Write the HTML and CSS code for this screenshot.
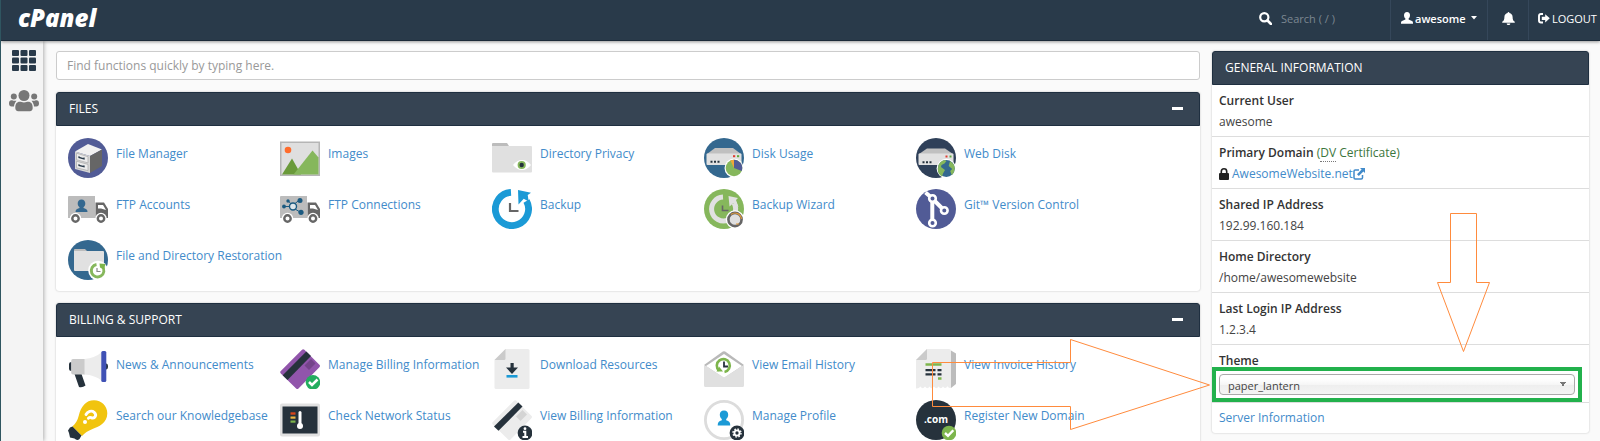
FILE: index.html
```html
<!DOCTYPE html>
<html lang="en">
<head>
<meta charset="utf-8">
<title>cPanel</title>
<link rel="stylesheet" href="styles.css">
</head>
<body>
<header class="topbar">
  <a class="logo" href="#">cPanel</a>
  <label class="top-search">
    <svg width="13" height="13" viewBox="0 0 13 13"><circle cx="5.3" cy="5.3" r="4.1" fill="none" stroke="#fff" stroke-width="2.2"/><path d="M8.5 8.5L12 12" stroke="#fff" stroke-width="2.6" stroke-linecap="round"/></svg>
    <input type="text" placeholder="Search ( / )" aria-label="Search">
  </label>
  <button class="top-cell user" type="button">
    <svg width="12" height="12" viewBox="0 0 12 12"><path d="M6 0c2 0 3 1.400 3 3.200 0 1.500-.6 2.600-1.400 3.300v1l3.400 1.400c.6.300 1 .900 1 2.100v.700H0V11c0-1.200.4-1.800 1-2.100l3.400-1.400v-1C3.600 5.800 3 4.700 3 3.200 3 1.400 4 0 6 0z" fill="#fff"/></svg>
    <span class="user-name">awesome</span>
    <svg class="caret" width="6" height="4" viewBox="0 0 6 4"><path d="M0 0h6L3 3.500z" fill="#fff"/></svg>
  </button>
  <button class="top-cell bell" type="button" aria-label="Notifications">
    <svg width="13" height="13" viewBox="0 0 13 13"><path d="M6.500 0c.6 0 .9.400.9.900 2 .400 3.200 2 3.200 4 0 2.800.7 3.700 1.900 4.700.6.500.4 1.200-.4 1.200H.9c-.8 0-1-.7-.4-1.200 1.200-1 1.900-1.900 1.900-4.700 0-2 1.200-3.600 3.200-4 0-.5.300-.9.900-.9zM4.700 11.400h3.600c0 1-.8 1.600-1.800 1.600s-1.800-.6-1.800-1.600z" fill="#fff"/></svg>
  </button>
  <a class="top-cell logout" href="#">
    <svg width="12" height="11" viewBox="0 0 12 11"><path d="M5 1H3Q1 1 1 3v4.500q0 2 2 2h2" fill="none" stroke="#fff" stroke-width="1.900"/><path d="M3.800 3.700h3.400V1.200L11.800 5.300 7.200 9.400V6.900H3.800z" fill="#fff"/></svg>
    <span>LOGOUT</span>
  </a>
</header>
<div class="shell">
  <nav class="side">
    <a href="#" aria-label="Home">
      <svg width="24" height="22" viewBox="0 0 24 22" fill="#293a4a"><rect width="7" height="6" rx="1"/><rect x="8.500" width="7" height="6" rx="1"/><rect x="17" width="7" height="6" rx="1"/><rect y="7.500" width="7" height="6" rx="1"/><rect x="8.500" y="7.500" width="7" height="6" rx="1"/><rect x="17" y="7.500" width="7" height="6" rx="1"/><rect y="15" width="7" height="6" rx="1"/><rect x="8.500" y="15" width="7" height="6" rx="1"/><rect x="17" y="15" width="7" height="6" rx="1"/></svg>
    </a>
    <a href="#" aria-label="User Manager">
      <svg width="30" height="22" viewBox="0 0 30 22" fill="#777"><circle cx="15" cy="5.500" r="5.500"/><path d="M6.300 18c0-4 1.500-6.200 4.500-6.200 1.200 0 2.200.7 4.200.7s3-.7 4.200-.7c3 0 4.500 2.200 4.500 6.200 0 2-1 3.200-3 3.200H9.300c-2 0-3-1.200-3-3.200z"/><circle cx="4.800" cy="6.500" r="3"/><circle cx="25.200" cy="6.500" r="3"/><path d="M0 13.500C0 11.500 1 10.300 2.500 10.300c1 0 1.500.5 2.800.5s1.700-.2 2.200-.1C6 12.500 5.200 14 5 16.500H2.500C1 16.500 0 15.500 0 13.500zM30 13.500c0-2-1-3.200-2.500-3.200-1 0-1.500.5-2.800.5s-1.700-.2-2.200-.1c1.500 1.800 2.300 3.300 2.500 5.800h2.500c1.500 0 2.500-1 2.500-3z"/></svg>
    </a>
  </nav>
  <main class="content">
    <input class="quick-find" type="text" placeholder="Find functions quickly by typing here." aria-label="Find functions">

    <section class="panel">
      <h2 class="panel-head">FILES<button type="button" class="collapse" aria-label="Collapse Files"></button></h2>
      <div class="items">
        <a class="item" href="#">
          <svg viewBox="0 0 40 40"><circle cx="20" cy="20" r="20" fill="#515b96"/><path d="M7 13.500L20 6l14 5.500-12 6.500z" fill="#f1f1f1"/><path d="M7 13.500L22 18v17L7 31z" fill="#d6d6d6"/><path d="M22 18l12-6.500V28L22 35z" fill="#666"/><path d="M8.500 15.200l11.500 3.500v6.200l-11.500-3.200zM8.500 23.200L20 26.400v6.200L8.500 29.800z" fill="#ececec" stroke="#aaa" stroke-width=".7"/><path d="M11 18.300v1.200l5 1.400v-1.300M11 26.200v1.200l5 1.300v-1.300" fill="none" stroke="#293a4a" stroke-width="1.300"/></svg>
          <span>File Manager</span></a>
        <a class="item" href="#">
          <svg viewBox="0 0 40 40"><path d="M.7 4.200h38.600v33H.7z" fill="#dfdfdf" stroke="#b5b5b5" stroke-width="1.600"/><circle cx="8" cy="12" r="3.300" fill="#ff6c2c"/><path d="M2 36.400L12 20.500l9 15.900z" fill="#6a9a3a"/><path d="M13.500 36.400L32.500 12.500l6 7v16.900z" fill="#86b75c"/></svg>
          <span>Images</span></a>
        <a class="item" href="#">
          <svg viewBox="0 0 40 40"><path d="M0 8V6q0-1 1-1h14l2 3v2H0z" fill="#bcbcbc"/><path d="M0 8h39q1 0 1 1v24.500q0 1-1 1H1q-1 0-1-1z" fill="#e0e0e0"/><path d="M21 27q4-5 9-5t9 5q-4 5-9 5t-9-5z" fill="#fff"/><circle cx="29.700" cy="27" r="4.100" fill="#86b75c"/><circle cx="29.700" cy="27" r="2.200" fill="#24313c"/></svg>
          <span>Directory Privacy</span></a>
        <a class="item" href="#">
          <svg viewBox="0 0 40 40"><circle cx="20" cy="20" r="20" fill="#34688f"/><path d="M11 10h18l8 6H3z" fill="#c0c0c0"/><path d="M3.500 15.500h33q1 0 1 1V26q0 1-1 1h-33q-1 0-1-1v-9.500q0-1 1-1z" fill="#e1e1e1"/><path d="M6.500 22.800h2v2h-2zM10 22.800h2v2h-2zM13.500 22.800h2v2h-2z" fill="#24313c"/><path d="M29 17.200h2.200v2H29z" fill="#e03c31"/><path d="M33 17.200h2.200v2H33z" fill="#5fa83a"/><circle cx="30" cy="30" r="9.500" fill="#fff"/><circle cx="30" cy="30" r="8.300" fill="#86b75c"/><path d="M30 30v-8.300a8.300 8.300 0 0 1 7.700 11.300z" fill="#515b96"/><path d="M30 30v-8.300a8 8 0 0 0-3.600.8z" fill="#f0a63a"/></svg>
          <span>Disk Usage</span></a>
        <a class="item" href="#">
          <svg viewBox="0 0 40 40"><circle cx="20" cy="20" r="20" fill="#2f4059"/><path d="M11 10.500h18l8 5.500H3z" fill="#c0c0c0"/><path d="M3.500 15.500h33q1 0 1 1V26q0 1-1 1h-33q-1 0-1-1v-9.500q0-1 1-1z" fill="#e1e1e1"/><path d="M6.500 23.300h2v2h-2zM10 23.300h2v2h-2zM13.500 23.300h2v2h-2z" fill="#24313c"/><path d="M29.500 17.500h2v2h-2z" fill="#e03c31"/><path d="M33.500 17.500h2v2h-2z" fill="#5fa83a"/><circle cx="30.300" cy="30.500" r="9.700" fill="#fff"/><circle cx="30.300" cy="30.500" r="8.500" fill="#34688f"/><path d="M22.500 27q2-4 6-5l2 1-2 2.500-3 1.500-.5 2 4 3-2 3.500-1 3q-4-2-4.200-7zM34 23q5 3 4.700 8-1 5-3 6l-1.500-4 2-2-3.500-3z" fill="#86b75c"/></svg>
          <span>Web Disk</span></a>
        <a class="item" href="#">
          <svg viewBox="0 0 40 40"><path d="M0 8q0-1 1-1h26v22H0z" fill="#bcbcbc"/><path d="M27.500 13.500H36l4.300 7V29H27.500z" fill="#666"/><path d="M30 16h5l3 5-5-1.500h-3z" fill="#fff"/><circle cx="7.500" cy="29.500" r="5.700" fill="#fff"/><circle cx="7.500" cy="29.500" r="3.200" fill="#fff" stroke="#666" stroke-width="2.400"/><circle cx="33" cy="29.500" r="5.700" fill="#fff"/><circle cx="33" cy="29.500" r="3.200" fill="#fff" stroke="#666" stroke-width="2.400"/><path d="M13.500 10.500c2.600 0 3.800 1.700 3.800 4 0 1.700-.8 3-1.800 3.700v.8c3 .8 4 1.700 4 4h-12c0-2.300 1-3.200 4-4v-.8c-1-.7-1.800-2-1.800-3.700 0-2.300 1.200-4 3.800-4z" fill="#34688f"/></svg>
          <span>FTP Accounts</span></a>
        <a class="item" href="#">
          <svg viewBox="0 0 40 40"><path d="M0 8q0-1 1-1h26v22H0z" fill="#bcbcbc"/><path d="M27.500 13.500H36l4.300 7V29H27.500z" fill="#666"/><path d="M30 16h5l3 5-5-1.500h-3z" fill="#fff"/><circle cx="7.500" cy="29.500" r="5.700" fill="#fff"/><circle cx="7.500" cy="29.500" r="3.200" fill="#fff" stroke="#666" stroke-width="2.400"/><circle cx="33" cy="29.500" r="5.700" fill="#fff"/><circle cx="33" cy="29.500" r="3.200" fill="#fff" stroke="#666" stroke-width="2.400"/><g fill="#1b5a80" stroke="#1b5a80"><path d="M4 17.500h6M8.500 12l2.500 3M15 14.500l4.500-3.500M15 20l5 3"/><circle cx="13" cy="17.500" r="3.500" fill="#dfe6ea" stroke-width="1.400"/><g stroke="none"><circle cx="4" cy="17.500" r="1.900"/><circle cx="8" cy="12" r="1.700"/><circle cx="20" cy="11.500" r="2.500"/><circle cx="21" cy="23.300" r="2.600"/></g></g></svg>
          <span>FTP Connections</span></a>
        <a class="item" href="#">
          <svg viewBox="0 0 40 40"><path d="M19 3.400A16.600 16.600 0 1 0 34.500 12" fill="none" stroke="#1b9ad6" stroke-width="6.800"/><path d="M26 1l13 2.800-3.300 2.200 1 6.500-5-2.800-5.200 5.800z" fill="#1b9ad6"/><path d="M18 14v8h8.500" fill="none" stroke="#666" stroke-width="2.200"/></svg>
          <span>Backup</span></a>
        <a class="item" href="#">
          <svg viewBox="0 0 40 40"><circle cx="20" cy="20" r="20" fill="#86b75c"/><path d="M19 8a12 12 0 1 0 11 6" fill="none" stroke="#e1e1e1" stroke-width="5"/><path d="M24.500 7l9.500 2-2 2 2.500 7-5-4-4 3.500z" fill="#e1e1e1"/><path d="M18.500 16.500v5h6" fill="none" stroke="#666" stroke-width="1.600"/><circle cx="31" cy="30.500" r="9.200" fill="#fff"/><circle cx="31" cy="30.500" r="6.600" fill="#dfdfdf" stroke="#666" stroke-width="2.600"/><path d="M27 25.500a6.400 6.400 0 0 1 10.400 4.500M32 35h3" fill="none" stroke="#e29a3a" stroke-width="1.200"/></svg>
          <span>Backup Wizard</span></a>
        <a class="item" href="#">
          <svg viewBox="0 0 40 40"><circle cx="20" cy="20" r="20" fill="#515b96"/><g fill="#515b96" stroke="#fff" stroke-width="2.600"><path d="M9.500 3.500l7 6M16.300 9.500v24M16.300 9.500l12 12" stroke-width="4"/><circle cx="16.500" cy="9.500" r="3.300"/><circle cx="28.300" cy="21.500" r="3.300"/><circle cx="16.500" cy="34" r="3.300"/></g></svg>
          <span>Git™ Version Control</span></a>
        <a class="item" href="#">
          <svg viewBox="0 0 40 40"><circle cx="20" cy="20" r="20" fill="#34688f"/><path d="M6 10q0-1 1-1h10l2 2v3H6z" fill="#bcbcbc"/><path d="M6 11h29q1 0 1 1v19H7q-1 0-1-1z" fill="#e1e1e1"/><circle cx="30" cy="30.500" r="9.800" fill="#fff"/><path d="M28.500 24.500a6.300 6.300 0 1 0 5.800 2" fill="none" stroke="#86b75c" stroke-width="2.900"/><path d="M31.500 23.500l6 .5-1.500 5.500-4-2z" fill="#7db54c"/><path d="M29 28v3.500h3.500" fill="none" stroke="#888" stroke-width="1.200"/></svg>
          <span>File and Directory Restoration</span></a>
      </div>
    </section>

    <section class="panel">
      <h2 class="panel-head">BILLING &amp; SUPPORT<button type="button" class="collapse" aria-label="Collapse Billing and Support"></button></h2>
      <div class="items">
        <a class="item" href="#">
          <svg viewBox="0 0 40 40"><path d="M3.500 13Q1 13 1 15v5q0 2 2.500 2zM38 14.500q2 0 2 3t-2 3zM6.500 25h7l4 11.500q-3 2.500-6.500 1.500z" fill="#26323c"/><path d="M5 10h12v15.500H5q-1.800 0-1.800-2V12q0-2 1.800-2z" fill="#cbcbcb"/><path d="M16.500 10Q27 9 34 3v29q-7-6-17.500-6.500z" fill="#ececec"/><rect x="33.300" y="2" width="5" height="31" rx="1.500" fill="#3f51b5"/></svg>
          <span>News &amp; Announcements</span></a>
        <a class="item" href="#">
          <svg viewBox="0 0 40 40"><path d="M22 .8q1.200-1.200 2.400 0l15 15q1.200 1.200 0 2.400L18.500 39.500q-1.200 1.200-2.400 0L.8 24.500q-1.200-1.200 0-2.400z" fill="#9155ab"/><path d="M26.300 2.500L31 7 7.500 31 2.700 26.300z" fill="#26323c"/><path d="M31 10l4.500 4.500-6.500 6.500-4.500-4.500z" fill="#74448a"/><circle cx="33" cy="33.300" r="7.300" fill="#24ad5f"/><path d="M29 33l3 3 5.500-5.500" fill="none" stroke="#fff" stroke-width="2.500"/></svg>
          <span>Manage Billing Information</span></a>
        <a class="item" href="#">
          <svg viewBox="0 0 40 40"><path d="M13.500 0H36q1.500 0 1.500 1.500v37Q37.500 40 36 40H4q-1.500 0-1.500-1.500V11z" fill="#ececec"/><path d="M13.500 0v9.500q0 1.500-1.500 1.500H2.500z" fill="#cbcbcb"/><path d="M18.500 14h3.200v4.500H26L20 25l-6-6.500h4.500z" fill="#26323c"/><path d="M14.500 26h11v2.600h-11z" fill="#1b9ad6"/></svg>
          <span>Download Resources</span></a>
        <a class="item" href="#">
          <svg viewBox="0 0 40 40"><path d="M0 16L18.800 2.600q1.200-.9 2.400 0L40 16l-20 14z" fill="#b9b9b9"/><path d="M2 17L20 5l18 12-18 12z" fill="#fff"/><path d="M0 16l20 12.500L40 16v20.500q0 1.500-1.500 1.500h-37Q0 38 0 36.500z" fill="#e0e0e0"/><path d="M15 21.500A6.500 6.500 0 1 1 20.500 23" fill="none" stroke="#7db54c" stroke-width="2.600"/><path d="M12.500 22.500h6.500l-4-5z" fill="#7db54c"/><path d="M20 12.500v5h4" fill="none" stroke="#26323c" stroke-width="1.800"/></svg>
          <span>View Email History</span></a>
        <a class="item" href="#">
          <svg viewBox="0 0 40 40"><path d="M35 1.500l5 3V35l-5 4z" fill="#bcbcbc"/><path d="M11 0h22q2 0 2 2v37q-2 .5-3.500-1.800-2 3.500-4.500.3-2 3.500-4.500 0-2 3.500-4.500 0-2.500 3.500-4.500 0-2 3.500-4.500 0-2.500 3.500-4.500 0Q2.500 40 0 39.500V11z" fill="#ececec"/><path d="M11 0v9.500q0 1.500-1.500 1.500H0z" fill="#cbcbcb"/><path d="M9.500 15.500h16M22 29.500h3.500" stroke="#7db54c" stroke-width="2.400"/><path d="M9.500 21.200h10M21.500 21.200h4M9.500 25.400h10M21.500 25.400h4" stroke="#26323c" stroke-width="2.200"/></svg>
          <span>View Invoice History</span></a>
        <a class="item" href="#">
          <svg viewBox="0 0 40 40"><path d="M26 .3c7.500 0 13.300 5.700 13.300 13 0 10-8.800 13.500-14.800 15.700-4.500 1.700-8 4-10.500 7L4.300 26.500c3.500-3 5.200-6 6.500-11C13 6.500 18 .3 26 .3z" fill="#f1c40f"/><path d="M4.500 26.500L13.500 35.500 11.500 39Q9 41 6.500 38.500L2 37.500 1 33 0 30.500 2 27.500z" fill="#26323c"/><path d="M18 14.500c1.500-3 5.500-4.500 8.200-2.200 3 2.600.8 7-3.200 5.300-1-.4-1.800-.2-2.600.6" fill="none" stroke="#fff" stroke-width="2.900" stroke-linecap="round"/><circle cx="17" cy="22" r="2" fill="#fff"/></svg>
          <span>Search our Knowledgebase</span></a>
        <a class="item" href="#">
          <svg viewBox="0 0 40 40"><rect y="3.500" width="40" height="33" rx="2" fill="#e1e1e1"/><path d="M2.500 6.500h35v27h-35z" fill="#26323c"/><path d="M10.500 13.500h5" stroke="#d8451a" stroke-width="2.400"/><path d="M10.500 17.600h5" stroke="#efb640" stroke-width="2.200"/><path d="M10.500 21.600h5" stroke="#7db54c" stroke-width="2.200"/><path d="M20 12.500v14" stroke="#fff" stroke-width="3" stroke-linecap="round"/><circle cx="20" cy="26" r="3" fill="#fff"/></svg>
          <span>Check Network Status</span></a>
        <a class="item" href="#">
          <svg viewBox="0 0 40 40"><path d="M22 .8q1.200-1.200 2.400 0l15 15q1.200 1.200 0 2.400L18.500 39.500q-1.200 1.200-2.400 0L.8 24.500q-1.200-1.200 0-2.400z" fill="#ececec"/><path d="M26.300 2.500L30.500 6.500 6.500 30.800 2 26.500z" fill="#26323c"/><path d="M30.500 10l4.500 4.500-6.500 6.500-4.500-4.500z" fill="#d4d4d4"/><circle cx="33" cy="33" r="7.400" fill="#26323c"/><path d="M31 31.800h2.300v5M30.500 37h5.500" fill="none" stroke="#fff" stroke-width="2"/><circle cx="33" cy="28.700" r="1.400" fill="#fff"/></svg>
          <span>View Billing Information</span></a>
        <a class="item" href="#">
          <svg viewBox="0 0 40 40"><circle cx="20" cy="20" r="18.600" fill="#fff" stroke="#dcdcdc" stroke-width="2.800"/><path d="M20 10.500c2.900 0 4.200 1.900 4.200 4.300 0 1.900-.8 3.300-2 4.200v1.200c3 .7 4.100 2.200 4.100 5.400H13.700c0-3.200 1.100-4.700 4.100-5.400V19c-1.200-.9-2-2.300-2-4.200 0-2.400 1.300-4.300 4.200-4.300z" fill="#1b9ad6"/><circle cx="33" cy="33" r="7.400" fill="#26323c"/><circle cx="33" cy="33" r="2.600" fill="none" stroke="#fff" stroke-width="1.900"/><circle cx="33" cy="33" r="4" fill="none" stroke="#fff" stroke-width="1.400" stroke-dasharray="1.570 1.570"/></svg>
          <span>Manage Profile</span></a>
        <a class="item" href="#">
          <svg viewBox="0 0 40 40"><circle cx="20" cy="20" r="20" fill="#26323c"/><text x="20" y="23" class="com" text-anchor="middle">.com</text><circle cx="33" cy="33" r="7.300" fill="#7db54c"/><path d="M29 33l3 2.800 5.300-5.600" fill="none" stroke="#fff" stroke-width="2.400"/></svg>
          <span>Register New Domain</span></a>
      </div>
    </section>
  </main>

  <aside class="info">
    <section class="panel">
      <h2 class="panel-head">GENERAL INFORMATION</h2>
      <dl class="facts">
        <div class="fact"><dt>Current User</dt><dd>awesome</dd></div>
        <div class="fact"><dt>Primary Domain <span class="cert">(<abbr title="Domain Validated">DV</abbr> Certificate)</span></dt>
          <dd class="domain"><svg class="lock" width="10" height="12" viewBox="0 0 10 12"><path d="M2.300 6V3.500a2.700 2.700 0 0 1 5.400 0V6" fill="none" stroke="#222" stroke-width="1.600"/><rect y="5" width="10" height="7" rx="1" fill="#222"/></svg><a href="#">AwesomeWebsite.net</a><svg width="12" height="12" viewBox="0 0 12 12"><path d="M6 2H2.200Q1 2 1 3.200v6.600Q1 11 2.200 11h6Q9.500 11 9.500 9.800V7" fill="none" stroke="#428bca" stroke-width="1.500"/><path d="M7 0h5v5l-1.600-1.600-4.600 4.600-1.800-1.800 4.600-4.600z" fill="#428bca"/></svg></dd></div>
        <div class="fact"><dt>Shared IP Address</dt><dd>192.99.160.184</dd></div>
        <div class="fact"><dt>Home Directory</dt><dd>/home/awesomewebsite</dd></div>
        <div class="fact"><dt>Last Login IP Address</dt><dd>1.2.3.4</dd></div>
        <div class="fact theme"><dt><label for="theme">Theme</label></dt>
          <dd class="theme-pick"><select id="theme"><option>paper_lantern</option></select></dd></div>
      </dl>
      <a class="server" href="#">Server Information</a>
    </section>
    <svg class="pointers" width="560" height="382" viewBox="0 0 560 382"><path d="M.5 149.500h138v-23L277.500 172 138.500 216.500v-23H.5zM518.500.5h26v69h13L531.500 138.500 505.500 69.500h13z" fill="none" stroke="#ff8b3d"/></svg>
  </aside>
</div>
</body>
</html>
```

FILE: styles.css
```css
* { box-sizing: border-box; }

body {
  display: flex;
  flex-direction: column;
  height: 100vh;
  margin: 0;
  overflow: hidden;
  border-left: 1px solid #2f5560;
  background: #fafafa;
  color: #333;
  font: 12px/21px "Open Sans", "Noto Sans", sans-serif;
}

a { color: #428bca; text-decoration: none; }
button { border: 0; background: none; font: inherit; color: inherit; }
input, select { font: inherit; }

.topbar {
  display: flex;
  align-items: stretch;
  flex: none;
  height: 41px;
  padding-left: 17px;
  border-bottom: 1px solid #1c2a38;
  background: #293a4a;
  box-shadow: 0 1px 3px rgba(0, 0, 0, .4);
  color: #fff;
  font-size: 11px;
  z-index: 2;
}

.logo {
  margin-right: auto;
  color: #fff;
  font: italic 800 24px/36px "Open Sans", sans-serif;
}

.top-search {
  display: flex;
  align-items: center;
  gap: 9px;
  width: 131px;
  padding-bottom: 4px;
}

.top-search input {
  width: 90px;
  padding: 0;
  border: 0;
  background: none;
  color: #fff;
}
.top-search input::placeholder { color: #7c8791; opacity: 1; }

.top-cell {
  display: flex;
  align-items: center;
  padding: 0 10px 4px;
  border-left: 1px solid #35475a;
}
.user { width: 97px; gap: 2px; }
.user-name { font-weight: 600; }
.caret { margin-left: auto; }
.bell { width: 41px; justify-content: center; }
.logout { width: 72px; gap: 2px; padding-right: 0; padding-left: 9px; color: #fff; }

.shell { display: flex; flex: 1; min-height: 0; }

.side {
  display: flex;
  flex: none;
  flex-direction: column;
  align-items: center;
  gap: 18px;
  width: 42px;
  padding: 9px 0 0 4px;
  background: #f4f4f4;
  box-shadow: 1px 0 4px rgba(0, 0, 0, .3);
}
.side a, .side svg { display: block; }

.content {
  display: flex;
  flex: 1;
  flex-direction: column;
  gap: 12px;
  min-width: 0;
  padding: 10px 12px 0 13px;
}

.quick-find {
  flex: none;
  height: 29px;
  padding: 0 10px 1px;
  border: 1px solid #ccc;
  border-radius: 3px;
  background: #fff;
  color: #333;
}
.quick-find::placeholder { color: #999; opacity: 1; }

.panel {
  flex: none;
  border-radius: 3px;
  background: #fff;
  box-shadow: 0 0 2px rgba(0, 0, 0, .25);
}

.panel-head {
  display: flex;
  align-items: center;
  justify-content: space-between;
  height: 34px;
  margin: 0;
  padding: 0 12px 1px;
  border: 1px solid #1f2f40;
  border-radius: 3px 3px 0 0;
  background: #364453;
  color: #fff;
  font-size: 12px;
  font-weight: 400;
}

.collapse { padding: 8px 4px; }
.collapse::before {
  content: "";
  display: block;
  width: 11px;
  height: 3px;
  background: #fff;
}

.items {
  display: grid;
  grid-template-columns: repeat(auto-fill, 212px);
  gap: 11px 0;
  padding: 12px 12px 11px;
}

.item {
  display: flex;
  gap: 8px;
  white-space: nowrap;
}
.item svg { flex: none; width: 40px; height: 40px; }
.item span { padding-top: 6px; line-height: 20px; }
.com { fill: #fff; font: 700 10px "Open Sans", sans-serif; }

.info {
  position: relative;
  flex: none;
  width: 388px;
  padding: 10px 11px 0 0;
}

.facts { margin: 0; }
.fact {
  padding: 5px 7px 4px;
  border-bottom: 1px solid #ddd;
}
.fact dt { font-weight: 600; }
.fact dd { margin: 0; color: #444; }
.cert { color: #3c763d; font-weight: 500; }
.cert abbr { text-decoration: none; border-bottom: 1px dotted #777; }

.domain { display: flex; align-items: center; }
.lock { margin-right: 3px; }

.theme { padding: 5px 0 0; }
.theme dt { height: 17px; padding: 0 7px; }
.theme .theme-pick {
  margin-right: 7px;
  padding: 3px;
  border: 4px solid #22b14c;
  background: #fff;
}
.theme-pick select {
  appearance: none;
  display: block;
  width: 100%;
  height: 21px;
  padding: 0 8px;
  border: 1px solid #aaa;
  border-radius: 4px;
  background:
    conic-gradient(from -30deg at 50% 100%, #777 60deg, transparent 0) no-repeat right 8px center / 6px 5px,
    linear-gradient(#fff 20%, #f6f6f6 50%, #eee 52%, #f4f4f4);
  color: #444;
  font-size: 11px;
}

.server { display: block; padding: 4px 7px 5px; }

.pointers {
  position: absolute;
  top: 172px;
  left: -280px;
  pointer-events: none;
}
```
